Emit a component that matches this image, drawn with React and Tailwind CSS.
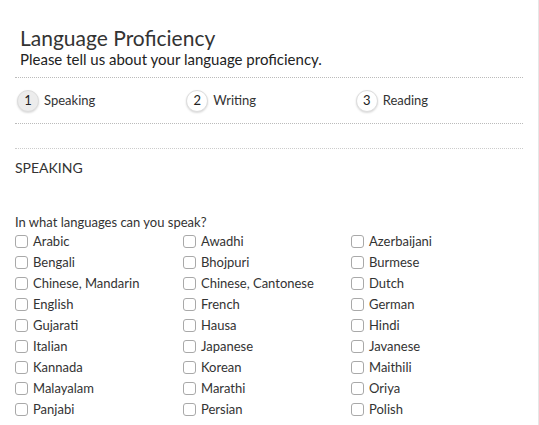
import React from "react";

const languages = [
  ["Arabic", "Awadhi", "Azerbaijani"],
  ["Bengali", "Bhojpuri", "Burmese"],
  ["Chinese, Mandarin", "Chinese, Cantonese", "Dutch"],
  ["English", "French", "German"],
  ["Gujarati", "Hausa", "Hindi"],
  ["Italian", "Japanese", "Javanese"],
  ["Kannada", "Korean", "Maithili"],
  ["Malayalam", "Marathi", "Oriya"],
  ["Panjabi", "Persian", "Polish"],
];

const steps = [
  { n: 1, label: "Speaking", active: true },
  { n: 2, label: "Writing" },
  { n: 3, label: "Reading" },
];

const Checkbox = ({ label }) => (
  <label className="flex items-center h-[21px] gap-[5px] cursor-pointer">
    <span className="w-[13px] h-[13px] rounded-[3px] border border-[#a9a9a9] bg-white shrink-0" />
    <span className="text-[13px] text-[#333]">{label}</span>
  </label>
);

const App = () => {
  return (
    <div
      className="w-[539px] h-[425px] overflow-hidden bg-white border-r border-[#e6e6e6]"
      style={{ fontFamily: "Lato, 'Open Sans', sans-serif" }}
    >
      <div className="w-[508px] ml-[15px] pt-[26px]">
        <div className="pl-[5px] pb-[9px]">
          <h1 className="text-[21px] leading-[24px] text-[#333]">Language Proficiency</h1>
          <p className="text-[15px] leading-[18px] text-[#222]">Please tell us about your language proficiency.</p>
        </div>

        <div className="border-t border-dotted border-[#bbb]" />
        <div className="grid grid-cols-3 h-[45px] items-center">
          {steps.map((s) => (
            <div key={s.n} className="flex items-center gap-[5px] pl-[2px]">
              <span
                className={`w-[22px] h-[22px] rounded-full flex items-center justify-center text-[13px] text-[#222] border border-[#ddd] shadow-[0_1px_2px_rgba(0,0,0,0.15)] ${
                  s.active ? "bg-[#ececec]" : "bg-white"
                }`}
              >
                {s.n}
              </span>
              <span className="text-[13px] text-[#333]">{s.label}</span>
            </div>
          ))}
        </div>
        <div className="border-t border-dotted border-[#bbb]" />

        <div className="mt-[24px] border-t border-dotted border-[#ccc]" />
        <div className="pt-[10px] text-[14px] text-[#333] leading-[18px]">SPEAKING</div>

        <div className="mt-[37px] text-[13px] text-[#333] leading-[16px]">In what languages can you speak?</div>
        <div className="mt-[1px] grid grid-cols-[168px_168px_168px]">
          {languages.flat().map((l) => (
            <Checkbox key={l} label={l} />
          ))}
        </div>
      </div>
    </div>
  );
};

export default App;
